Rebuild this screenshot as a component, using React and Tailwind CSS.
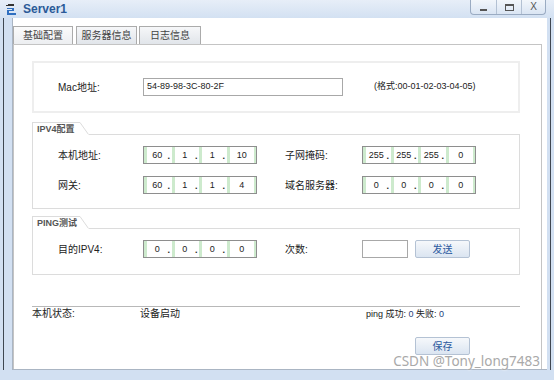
import React from 'react'

function IpField({ values }) {
  return (
    <div className="flex h-[18px] w-[114px] border border-[#8e8e8e] bg-white">
      {values.map((v, i) => (
        <div key={i} className="flex flex-1 items-center border-l-[3px] border-[#cdeacd]">
          <span className="flex-1 text-center text-[9px] leading-none">{v}</span>
          {i < 3 && <span className="w-[4px] pt-[3px] text-[9px] font-bold leading-none">.</span>}
        </div>
      ))}
      <div className="w-[2px] bg-[#cdeacd]" />
    </div>
  )
}

function SectionHead({ title, width }) {
  return (
    <div className="flex h-[13px] items-stretch">
      <div
        className="flex items-center border-l border-t border-[#dcdcdc] pl-[4px] text-[9px] font-bold leading-none text-[#555]"
        style={{ width }}
      >
        {title}
      </div>
      <svg width="9" height="13" className="shrink-0">
        <line x1="0" y1="0.5" x2="8.5" y2="12.5" stroke="#dcdcdc" strokeWidth="1" />
      </svg>
      <div className="flex-1 border-b border-[#dcdcdc]" />
    </div>
  )
}

function Btn({ children }) {
  return (
    <button className="flex h-[18px] w-[55px] items-center justify-center rounded-[2px] border border-[#b4c2d4] bg-gradient-to-b from-[#f6f8fb] to-[#dbe5f1] text-[10px] text-[#2c5aa0]">
      {children}
    </button>
  )
}

export default function App() {
  return (
    <div className="relative h-[380px] w-[554px] overflow-hidden bg-[#d2e0f2] font-['Liberation_Sans','Noto_Sans_CJK_SC',sans-serif] text-[#222]">
      {/* title bar */}
      <div className="flex h-[18px] items-start bg-gradient-to-b from-[#e7eef8] to-[#d3e1f2]">
        <svg width="12" height="12" viewBox="0 0 12 12" className="ml-[6px] mt-[4px]">
          <rect x="2" y="0" width="6" height="2" fill="#333" />
          <rect x="0" y="1" width="2" height="1" fill="#333" />
          <path d="M1 4 H8 V7 H3 V9 H10 V11 H1 V6 H6 V5 H1 Z" fill="#2f6fc0" />
        </svg>
        <span className="ml-[5px] mt-[2px] text-[12px] font-bold leading-[14px] text-[#2a5a98]">Server1</span>
        <div className="ml-auto mr-[8px] flex h-[15px] overflow-hidden rounded-b-[4px] border border-t-0 border-[#9aabc2] bg-gradient-to-b from-[#f2f6fb] to-[#dae5f3]">
          <div className="flex w-[25px] items-end justify-center pb-[3px]">
            <div className="h-[2px] w-[7px] bg-[#555]" />
          </div>
          <div className="flex w-[25px] items-center justify-center border-l border-[#b3c1d3]">
            <div className="h-[7px] w-[9px] border border-t-2 border-[#555]" />
          </div>
          <div className="flex w-[24px] items-center justify-center border-l border-[#b3c1d3] text-[10px] leading-none text-[#555]">
            X
          </div>
        </div>
      </div>

      {/* body */}
      <div className="flex h-[352px]">
        <div className="flex w-[12px]">
          <div className="ml-[3px] w-px bg-[#3f4752]" />
        </div>
        <div className="w-[535px] border-b border-l border-[#aab5c3] bg-white pt-[8px]">
          {/* tabs */}
          <div className="flex text-[10px] leading-none text-[#444]">
            <div className="flex h-[18px] w-[60px] items-center justify-center border border-b-0 border-[#ababab] bg-gradient-to-b from-[#fbfbfb] to-[#eceef1]">基础配置</div>
            <div className="ml-[3px] flex h-[18px] w-[61px] items-center justify-center border border-b-0 border-[#ababab] bg-gradient-to-b from-[#f6f7f9] to-[#e1e5ea]">服务器信息</div>
            <div className="ml-[2px] flex h-[18px] w-[62px] items-center justify-center border border-b-0 border-[#ababab] bg-gradient-to-b from-[#f6f7f9] to-[#e1e5ea]">日志信息</div>
          </div>

          {/* panel */}
          <div className="h-[325px] w-[529px] border border-b-0 border-[#c4c4c4] pl-[18px] pt-[16px] text-[10px]">
            <div className="w-[488px]">
              {/* mac */}
              <div className="flex h-[52px] items-center border-2 border-[#eeeeee] pl-[24px]">
                <span className="w-[85px]">Mac地址:</span>
                <div className="flex h-[18px] w-[200px] items-center border border-[#a8a8a8] pl-[3px] text-[9px]">54-89-98-3C-80-2F</div>
                <span className="ml-[31px] text-[9px]">(格式:00-01-02-03-04-05)</span>
              </div>

              {/* ipv4 */}
              <div className="mt-[9px]">
                <SectionHead title="IPV4配置" width="48px" />
                <div className="flex h-[74px] flex-col gap-[12px] border-x border-b border-[#dcdcdc] pl-[25px] pt-[11px]">
                  <div className="flex items-center">
                    <span className="w-[85px]">本机地址:</span>
                    <IpField values={['60', '1', '1', '10']} />
                    <span className="ml-[28px] w-[77px]">子网掩码:</span>
                    <IpField values={['255', '255', '255', '0']} />
                  </div>
                  <div className="flex items-center">
                    <span className="w-[85px]">网关:</span>
                    <IpField values={['60', '1', '1', '4']} />
                    <span className="ml-[28px] w-[77px]">域名服务器:</span>
                    <IpField values={['0', '0', '0', '0']} />
                  </div>
                </div>
              </div>

              {/* ping */}
              <div className="mt-[7px]">
                <SectionHead title="PING测试" width="48px" />
                <div className="flex h-[46px] items-start border-x border-b border-[#dcdcdc] pl-[25px] pt-[11px]">
                  <div className="flex items-center">
                    <span className="w-[85px]">目的IPV4:</span>
                    <IpField values={['0', '0', '0', '0']} />
                    <span className="ml-[28px] w-[77px]">次数:</span>
                    <div className="h-[18px] w-[46px] border border-[#a8a8a8]" />
                    <div className="ml-[7px]">
                      <Btn>发送</Btn>
                    </div>
                  </div>
                </div>
              </div>

              {/* status */}
              <div className="mt-[31px] flex border-t border-[#b8b8b8] pt-[1px] leading-[12px]">
                <span className="w-[108px]">本机状态:</span>
                <span className="w-[226px]">设备启动</span>
                <span className="text-[9px]">
                  ping 成功: <span className="text-[#1f3f7a]">0</span> 失败: <span className="text-[#1f3f7a]">0</span>
                </span>
              </div>

              <div className="mt-[17px] flex pl-[383px]">
                <Btn>保存</Btn>
              </div>
            </div>
          </div>
        </div>
        <div className="flex w-[7px]">
          <div className="ml-[3px] w-px bg-[#3f4752]" />
        </div>
      </div>

      <span className="absolute bottom-[12px] right-[14px] font-['Noto_Sans',sans-serif] text-[13.5px] leading-none text-[#a9a9a9] [text-shadow:0_0_2px_#fff]">
        CSDN @Tony_long7483
      </span>
    </div>
  )
}
